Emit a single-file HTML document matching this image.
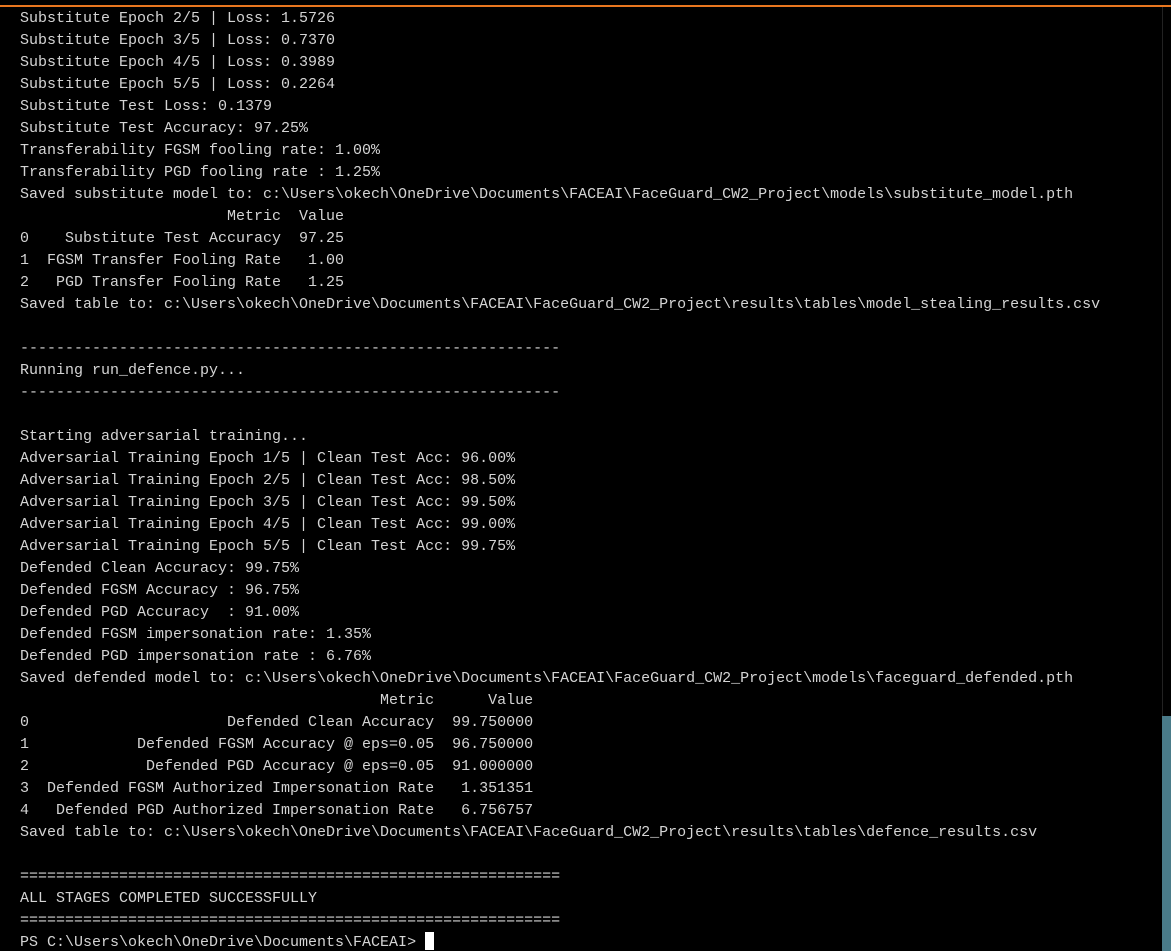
<!DOCTYPE html>
<html><head><meta charset="utf-8"><style>
html,body{margin:0;padding:0;background:#000;width:1171px;height:951px;overflow:hidden;position:relative}
#bar{position:absolute;left:0;top:5px;width:1171px;height:2px;background:#e8761f}
pre{position:absolute;left:20px;top:8px;margin:0;font-family:"Liberation Mono",monospace;font-size:15px;line-height:22px;color:#d4d4d4;white-space:pre}
#sb{position:absolute;left:1162px;top:716px;width:9px;height:235px;background:#4a7b89}
#sbl{position:absolute;left:1162px;top:7px;width:1px;height:709px;background:#222}
#cur{display:inline-block;width:9px;height:18px;background:#fff;vertical-align:-4px}
</style></head><body>
<div id="bar"></div><div id="sbl"></div><div id="sb"></div>
<pre>Substitute Epoch 2/5 | Loss: 1.5726
Substitute Epoch 3/5 | Loss: 0.7370
Substitute Epoch 4/5 | Loss: 0.3989
Substitute Epoch 5/5 | Loss: 0.2264
Substitute Test Loss: 0.1379
Substitute Test Accuracy: 97.25%
Transferability FGSM fooling rate: 1.00%
Transferability PGD fooling rate : 1.25%
Saved substitute model to: c:\Users\okech\OneDrive\Documents\FACEAI\FaceGuard_CW2_Project\models\substitute_model.pth
                       Metric  Value
0    Substitute Test Accuracy  97.25
1  FGSM Transfer Fooling Rate   1.00
2   PGD Transfer Fooling Rate   1.25
Saved table to: c:\Users\okech\OneDrive\Documents\FACEAI\FaceGuard_CW2_Project\results\tables\model_stealing_results.csv

------------------------------------------------------------
Running run_defence.py...
------------------------------------------------------------

Starting adversarial training...
Adversarial Training Epoch 1/5 | Clean Test Acc: 96.00%
Adversarial Training Epoch 2/5 | Clean Test Acc: 98.50%
Adversarial Training Epoch 3/5 | Clean Test Acc: 99.50%
Adversarial Training Epoch 4/5 | Clean Test Acc: 99.00%
Adversarial Training Epoch 5/5 | Clean Test Acc: 99.75%
Defended Clean Accuracy: 99.75%
Defended FGSM Accuracy : 96.75%
Defended PGD Accuracy  : 91.00%
Defended FGSM impersonation rate: 1.35%
Defended PGD impersonation rate : 6.76%
Saved defended model to: c:\Users\okech\OneDrive\Documents\FACEAI\FaceGuard_CW2_Project\models\faceguard_defended.pth
                                        Metric      Value
0                      Defended Clean Accuracy  99.750000
1            Defended FGSM Accuracy @ eps=0.05  96.750000
2             Defended PGD Accuracy @ eps=0.05  91.000000
3  Defended FGSM Authorized Impersonation Rate   1.351351
4   Defended PGD Authorized Impersonation Rate   6.756757
Saved table to: c:\Users\okech\OneDrive\Documents\FACEAI\FaceGuard_CW2_Project\results\tables\defence_results.csv

============================================================
ALL STAGES COMPLETED SUCCESSFULLY
============================================================
PS C:\Users\okech\OneDrive\Documents\FACEAI&gt; <span id="cur"></span></pre>
</body></html>
